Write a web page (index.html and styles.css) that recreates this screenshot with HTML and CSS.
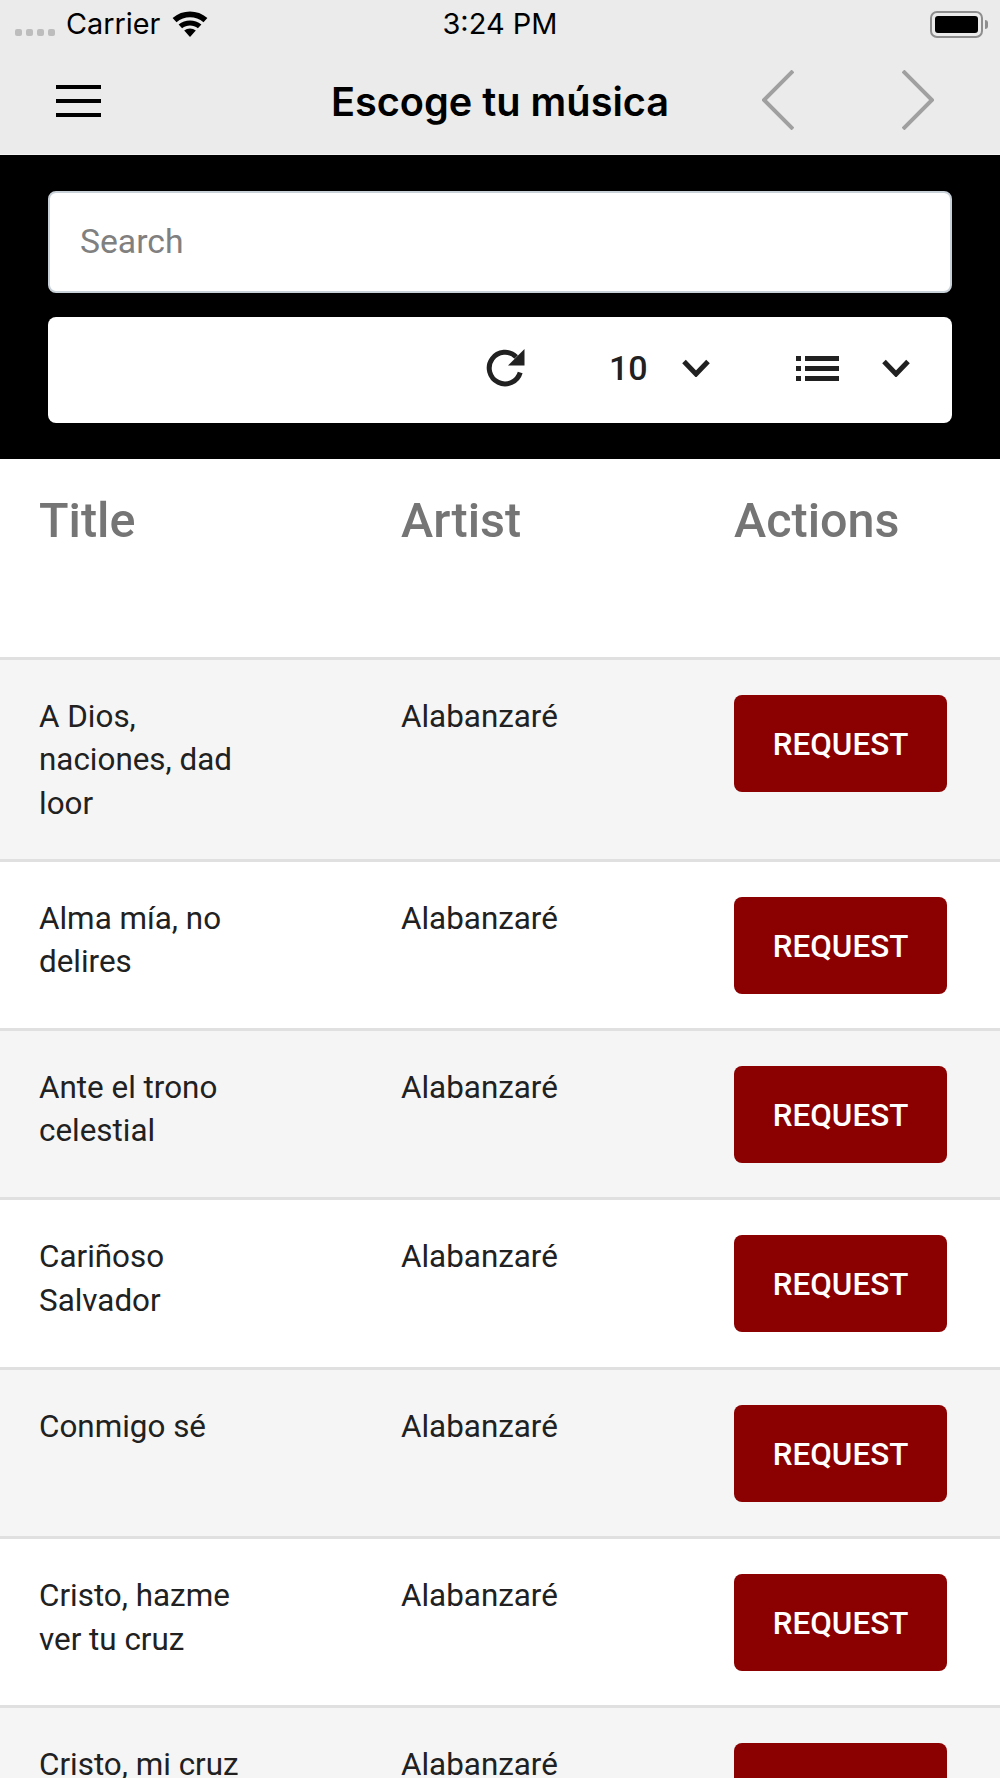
FILE: index.html
```html
<!DOCTYPE html>
<html lang="es">
<head>
<meta charset="utf-8">
<title>Escoge tu música</title>
<link rel="stylesheet" href="styles.css">
</head>
<body>
<header class="app-header">
  <div class="status-bar">
    <div class="status-left">
      <span class="signal"><i></i><i></i><i></i><i></i></span>
      <span class="carrier">Carrier</span>
      <svg class="wifi" viewBox="0 0 36 27" aria-hidden="true"><path d="M18 27 12.2 20.6C15.6 17.7 20.4 17.7 23.8 20.6Z"/><path d="M10.1 18.3 6.6 14.5C13.2 9 22.8 9 29.4 14.5L25.9 18.3C21.2 14.6 14.8 14.6 10.1 18.3Z"/><path d="M4.5 12.2 0.6 8C10.5-.6 25.5-.6 35.4 8L31.5 12.2C23.7 5.6 12.3 5.6 4.5 12.2Z"/></svg>
    </div>
    <span class="time">3:24 PM</span>
    <div class="status-right">
      <span class="battery"><span class="battery-fill"></span></span>
      <span class="battery-nub"></span>
    </div>
  </div>
  <nav class="nav-bar">
    <button class="menu-btn" aria-label="Menu"><i></i><i></i><i></i></button>
    <h1 class="nav-title">Escoge tu música</h1>
    <div class="nav-arrows">
      <svg class="arrow" viewBox="0 0 32 60" aria-hidden="true"><path d="M31 1 2 30 31 59"/></svg>
      <svg class="arrow" viewBox="0 0 32 60" aria-hidden="true"><path d="M1 1 30 30 1 59"/></svg>
    </div>
  </nav>
</header>

<section class="search-panel">
  <div class="search-box"><span class="placeholder">Search</span></div>
  <div class="toolbar">
    <svg class="tool-refresh" viewBox="0 0 40 40" aria-hidden="true"><path d="M34.2 24.5A15.8 15.8 0 1 1 30.2 8.9"/><path class="solid" d="M38.5 1V17.5H22Z"/></svg>
    <span class="page-size">10</span>
    <svg class="chevron chevron-size" viewBox="0 0 28 18" aria-hidden="true"><path d="M2 2.5 14 15 26 2.5"/></svg>
    <svg class="tool-list" viewBox="0 0 43 25" aria-hidden="true"><path d="M0 0h5v5H0zM9 0h34v5H9zM0 10h5v5H0zM9 10h34v5H9zM0 20h5v5H0zM9 20h34v5H9z"/></svg>
    <svg class="chevron chevron-view" viewBox="0 0 28 18" aria-hidden="true"><path d="M2 2.5 14 15 26 2.5"/></svg>
  </div>
</section>

<main class="table">
  <div class="row head">
    <div class="cell">Title</div>
    <div class="cell">Artist</div>
    <div class="cell">Actions</div>
  </div>
  <div class="row odd tall">
    <div class="cell title">A Dios, naciones, dad loor</div>
    <div class="cell">Alabanzaré</div>
    <div class="cell"><button class="request">REQUEST</button></div>
  </div>
  <div class="row">
    <div class="cell title">Alma mía, no delires</div>
    <div class="cell">Alabanzaré</div>
    <div class="cell"><button class="request">REQUEST</button></div>
  </div>
  <div class="row odd">
    <div class="cell title">Ante el trono celestial</div>
    <div class="cell">Alabanzaré</div>
    <div class="cell"><button class="request">REQUEST</button></div>
  </div>
  <div class="row">
    <div class="cell title">Cariñoso Salvador</div>
    <div class="cell">Alabanzaré</div>
    <div class="cell"><button class="request">REQUEST</button></div>
  </div>
  <div class="row odd">
    <div class="cell title">Conmigo sé</div>
    <div class="cell">Alabanzaré</div>
    <div class="cell"><button class="request">REQUEST</button></div>
  </div>
  <div class="row">
    <div class="cell title">Cristo, hazme ver tu cruz</div>
    <div class="cell">Alabanzaré</div>
    <div class="cell"><button class="request">REQUEST</button></div>
  </div>
  <div class="row odd">
    <div class="cell title">Cristo, mi cruz</div>
    <div class="cell">Alabanzaré</div>
    <div class="cell"><button class="request">REQUEST</button></div>
  </div>
</main>
</body>
</html>
```
FILE: styles.css
```css
* { box-sizing: border-box; }
html, body { margin: 0; height: 1778px; overflow: hidden; background: #fff; }
body { font-family: Roboto, "Liberation Sans", sans-serif; color: #212121; }

.app-header {
  height: 155px;
  background: #ebebeb;
  border-bottom: 1px solid #f5f5f5;
  font-family: Inter, "Liberation Sans", sans-serif;
  color: #000;
}
.status-bar {
  height: 48px;
  display: grid;
  grid-template-columns: 1fr auto 1fr;
  align-items: center;
}
.status-left { display: flex; align-items: center; padding-left: 15px; }
.signal { display: flex; gap: 4px; margin-top: 17px; margin-right: 11px; }
.signal i { width: 7px; height: 7px; border-radius: 2px; background: #bdbdbd; }
.carrier { font-size: 28.8px; line-height: 48px; }
.wifi { width: 36px; height: 27px; margin-left: 12px; fill: #000; margin-top: -1px; }
.time { font-size: 29px; line-height: 48px; }
.status-right { display: flex; align-items: center; justify-content: flex-end; padding-right: 12px; }
.battery {
  width: 53px; height: 27px; padding: 3px;
  border: 2px solid #8e8e8e; border-radius: 7px; display: block;
}
.battery-fill { display: block; height: 100%; background: #000; border-radius: 3px; }
.battery-nub { width: 3px; height: 9px; background: #8e8e8e; margin-left: 2px; border-radius: 0 3px 3px 0; }

.nav-bar {
  height: 106px;
  display: grid;
  grid-template-columns: 1fr auto 1fr;
  align-items: center;
}
.menu-btn {
  justify-self: start;
  margin: 0 0 0 56px; padding: 0;
  width: 45px; height: 32px;
  display: flex; flex-direction: column; justify-content: space-between;
  border: 0; background: none;
}
.menu-btn i { display: block; height: 4px; background: #000; }
.nav-title { margin: 1px 0 0; font-size: 39.7px; font-weight: 600; line-height: 46px; }
.nav-arrows { justify-self: end; display: flex; gap: 108px; padding-right: 66px; margin-top: -2px; }
.arrow { width: 32px; height: 60px; fill: none; stroke: #a0a0a0; stroke-width: 4; }

.search-panel {
  background: #000;
  height: 304px;
  padding: 36px 48px;
  display: flex; flex-direction: column; gap: 24.5px;
}
.search-box {
  height: 101.5px;
  background: #fff;
  border: 2px solid #c8d0d8;
  border-radius: 8px;
  padding: 0 30px;
  display: flex; align-items: center;
}
.placeholder { font-size: 33.7px; color: #808080; }
.toolbar {
  height: 106px;
  background: #fff;
  border-radius: 8px;
  display: flex; align-items: center; justify-content: flex-end;
  padding: 0 42px 4px 0;
  color: #212121;
}
.tool-refresh { width: 40px; height: 40px; fill: none; stroke: #212121; stroke-width: 5; margin-right: 83px; }
.tool-refresh .solid { fill: #212121; stroke: none; }
.page-size { font-size: 34px; font-weight: 500; line-height: 40px; width: 38px; margin-right: 35px; }
.chevron { width: 28px; height: 18px; fill: none; stroke: #212121; stroke-width: 5; }
.chevron-size { margin-right: 86px; }
.tool-list { width: 43px; height: 25px; fill: #212121; margin-right: 43px; }

.table { display: block; }
.row {
  display: grid;
  grid-template-columns: 362px 333px 1fr;
  padding: 35px 53px 35px 39px;
  height: 169.4px;
  border-bottom: 3.5px solid #e0e0e0;
  font-size: 31.4px;
  line-height: 43.5px;
}
.row.head {
  height: 200.5px;
  padding-top: 34px;
  font-size: 48.5px;
  line-height: 56px;
  font-weight: 500;
  color: #757575;
}
.row.odd { background: #f5f5f5; }
.row.tall { height: 202px; }
.title { max-width: 220px; }
.request {
  display: block;
  width: 100%;
  height: 97px;
  padding: 2px 0 0;
  border: 0;
  border-radius: 8px;
  background: #8b0000;
  color: #fff;
  font: 500 31.4px Roboto, sans-serif;
}
```
